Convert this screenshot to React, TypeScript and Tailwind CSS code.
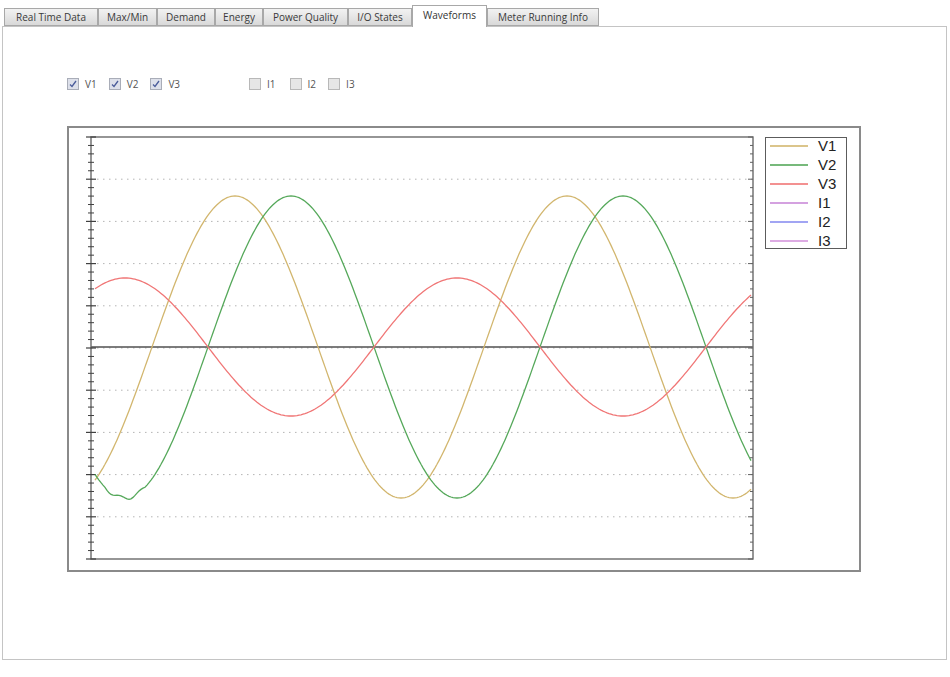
import React from "react"

const tabs = [
  { label: "Real Time Data", w: "w-[94px]" },
  { label: "Max/Min", w: "w-[59px]" },
  { label: "Demand", w: "w-[58px]" },
  { label: "Energy", w: "w-[48px]" },
  { label: "Power Quality", w: "w-[85px]" },
  { label: "I/O States", w: "w-[64px]" },
  { label: "Waveforms", w: "w-[75px]", active: true },
  { label: "Meter Running Info", w: "w-[112px]" },
]

const checks = [
  { label: "V1", on: true, gap: "ml-0" },
  { label: "V2", on: true, gap: "ml-[12px]" },
  { label: "V3", on: true, gap: "ml-[12px]" },
  { label: "I1", on: false, gap: "ml-[69px]" },
  { label: "I2", on: false, gap: "ml-[14px]" },
  { label: "I3", on: false, gap: "ml-[12px]" },
]

const legend = [
  { label: "V1", color: "#d2b66e" },
  { label: "V2", color: "#55a85a" },
  { label: "V3", color: "#f07676" },
  { label: "I1", color: "#c98ad8" },
  { label: "I2", color: "#8a8ef0" },
  { label: "I3", color: "#d596dc" },
]

// svg origin sits at page (84, 133)
const OX = 84
const OY = 133
const TOP = 137 - OY
const BOT = 559 - OY
const LEFT = 91 - OX
const RIGHT = 753 - OX
const MID = 347 - OY
const DIV = (BOT - TOP) / 10
const PERIOD = 332

function wave(fn: (x: number) => number) {
  const pts: string[] = []
  for (let x = 95; x <= 752; x += 2) {
    pts.push(`${(x - OX).toFixed(1)},${(fn(x) - OY).toFixed(1)}`)
  }
  return pts.join(" ")
}

const v1 = wave((x) => 347 - 151 * Math.sin((2 * Math.PI * (x - 152)) / PERIOD))
const v2 = wave((x) => {
  const base = 347 - 151 * Math.sin((2 * Math.PI * (x - 208)) / PERIOD)
  // small jag near the first trough
  const rip = x > 105 && x < 145 ? 1.8 * Math.sin((x - 105) / 3.2) : 0
  return base + rip
})
const v3 = wave((x) => 347 + 69 * Math.sin((2 * Math.PI * (x - 208)) / PERIOD))

function CheckBox({ on }: { on: boolean }) {
  return (
    <span
      className={
        on
          ? "w-[12px] h-[12px] border border-[#a9adb8] bg-[#dde0ea] flex items-center justify-center"
          : "w-[12px] h-[12px] border border-[#b8b8b8] bg-[#e6e6e6]"
      }
    >
      {on && (
        <svg width="8" height="8" viewBox="0 0 8 8">
          <path d="M1 4.5 L3 6.5 L7 1" fill="none" stroke="#4a5c9a" strokeWidth="1.3" />
        </svg>
      )}
    </span>
  )
}

function Plot() {
  const majors: number[] = []
  const minors: number[] = []
  for (let i = 0; i <= 50; i++) {
    const y = TOP + (i * DIV) / 5
    if (i % 5 === 0) majors.push(y)
    else minors.push(y)
  }
  return (
    <svg width={671} height={430} className="shrink-0">
      {/* dotted grid */}
      {majors.slice(1, -1).map((y) =>
        Math.abs(y - MID) < 1 ? null : (
          <line key={y} x1={LEFT} x2={RIGHT} y1={y} y2={y} stroke="#b4b4b4" strokeWidth="1" strokeDasharray="1.5 4.5" />
        )
      )}
      <line x1={LEFT} x2={RIGHT} y1={MID} y2={MID} stroke="#505050" strokeWidth="1.3" />
      {/* frame */}
      <rect x={LEFT} y={TOP} width={RIGHT - LEFT} height={BOT - TOP} fill="none" stroke="#6a6a6a" strokeWidth="1.4" />
      {/* left axis ticks */}
      {majors.map((y) => (
        <line key={"M" + y} x1={LEFT - 5} x2={LEFT + 5} y1={y} y2={y} stroke="#404040" strokeWidth="1.2" />
      ))}
      {minors.map((y) => (
        <line key={"m" + y} x1={LEFT - 3} x2={LEFT + 3} y1={y} y2={y} stroke="#404040" strokeWidth="1" />
      ))}
      {/* right axis ticks */}
      {majors.map((y) => (
        <line key={"RM" + y} x1={RIGHT - 5} x2={RIGHT} y1={y} y2={y} stroke="#606060" strokeWidth="1" />
      ))}
      {minors.map((y) => (
        <line key={"Rm" + y} x1={RIGHT - 3} x2={RIGHT} y1={y} y2={y} stroke="#606060" strokeWidth="1" />
      ))}
      <polyline points={v1} fill="none" stroke="#d2b66e" strokeWidth="1.3" />
      <polyline points={v2} fill="none" stroke="#55a85a" strokeWidth="1.3" />
      <polyline points={v3} fill="none" stroke="#f07676" strokeWidth="1.3" />
    </svg>
  )
}

export default function App() {
  return (
    <div className="w-[950px] h-[677px] bg-white font-['Open_Sans',sans-serif] text-[#333]">
      {/* Tabs */}
      <div className="flex items-end h-[27px] pl-[4px] relative z-10 -mb-px">
        {tabs.map((t) =>
          t.active ? (
            <div
              key={t.label}
              className={`${t.w} h-[22px] bg-white border border-b-0 border-[#a8a8a8] text-[10px] leading-none flex items-center justify-center pb-[3px]`}
            >
              {t.label}
            </div>
          ) : (
            <div
              key={t.label}
              className={`${t.w} h-[18px] bg-gradient-to-b from-[#f2f2f2] to-[#d9d9d9] border border-[#a8a8a8] text-[10px] leading-none text-[#3a3a3a] flex items-center justify-center mb-px`}
            >
              {t.label}
            </div>
          )
        )}
      </div>

      {/* Panel */}
      <div className="ml-[2px] w-[945px] h-[634px] border border-[#c4c4c4] bg-white">
        <div className="flex items-center pl-[64px] pt-[51px] h-[63px] text-[10px] text-[#555]">
          {checks.map((c) => (
            <div key={c.label} className={`flex items-center ${c.gap}`}>
              <CheckBox on={c.on} />
              <span className="ml-[6px]">{c.label}</span>
            </div>
          ))}
        </div>

        {/* Chart */}
        <div className="ml-[64px] mt-[36px] w-[794px] h-[446px] border-2 border-[#8a8a8a] flex pl-[15px] pt-[5px]">
          <Plot />
          <div className="ml-[10px] mt-[4px] w-[82px] h-[112px] border-[1.5px] border-[#5c5c5c] flex flex-col font-['Liberation_Sans',Arial,sans-serif] text-[15px] text-[#222]">
            {legend.map((l) => (
              <div key={l.label} className="flex items-start h-[19px] shrink-0">
                <span className="ml-[4px] mt-[7px] w-[38px] h-[2px] opacity-80" style={{ backgroundColor: l.color }} />
                <span className="ml-[10px] leading-none">{l.label}</span>
              </div>
            ))}
          </div>
        </div>
      </div>
    </div>
  )
}
